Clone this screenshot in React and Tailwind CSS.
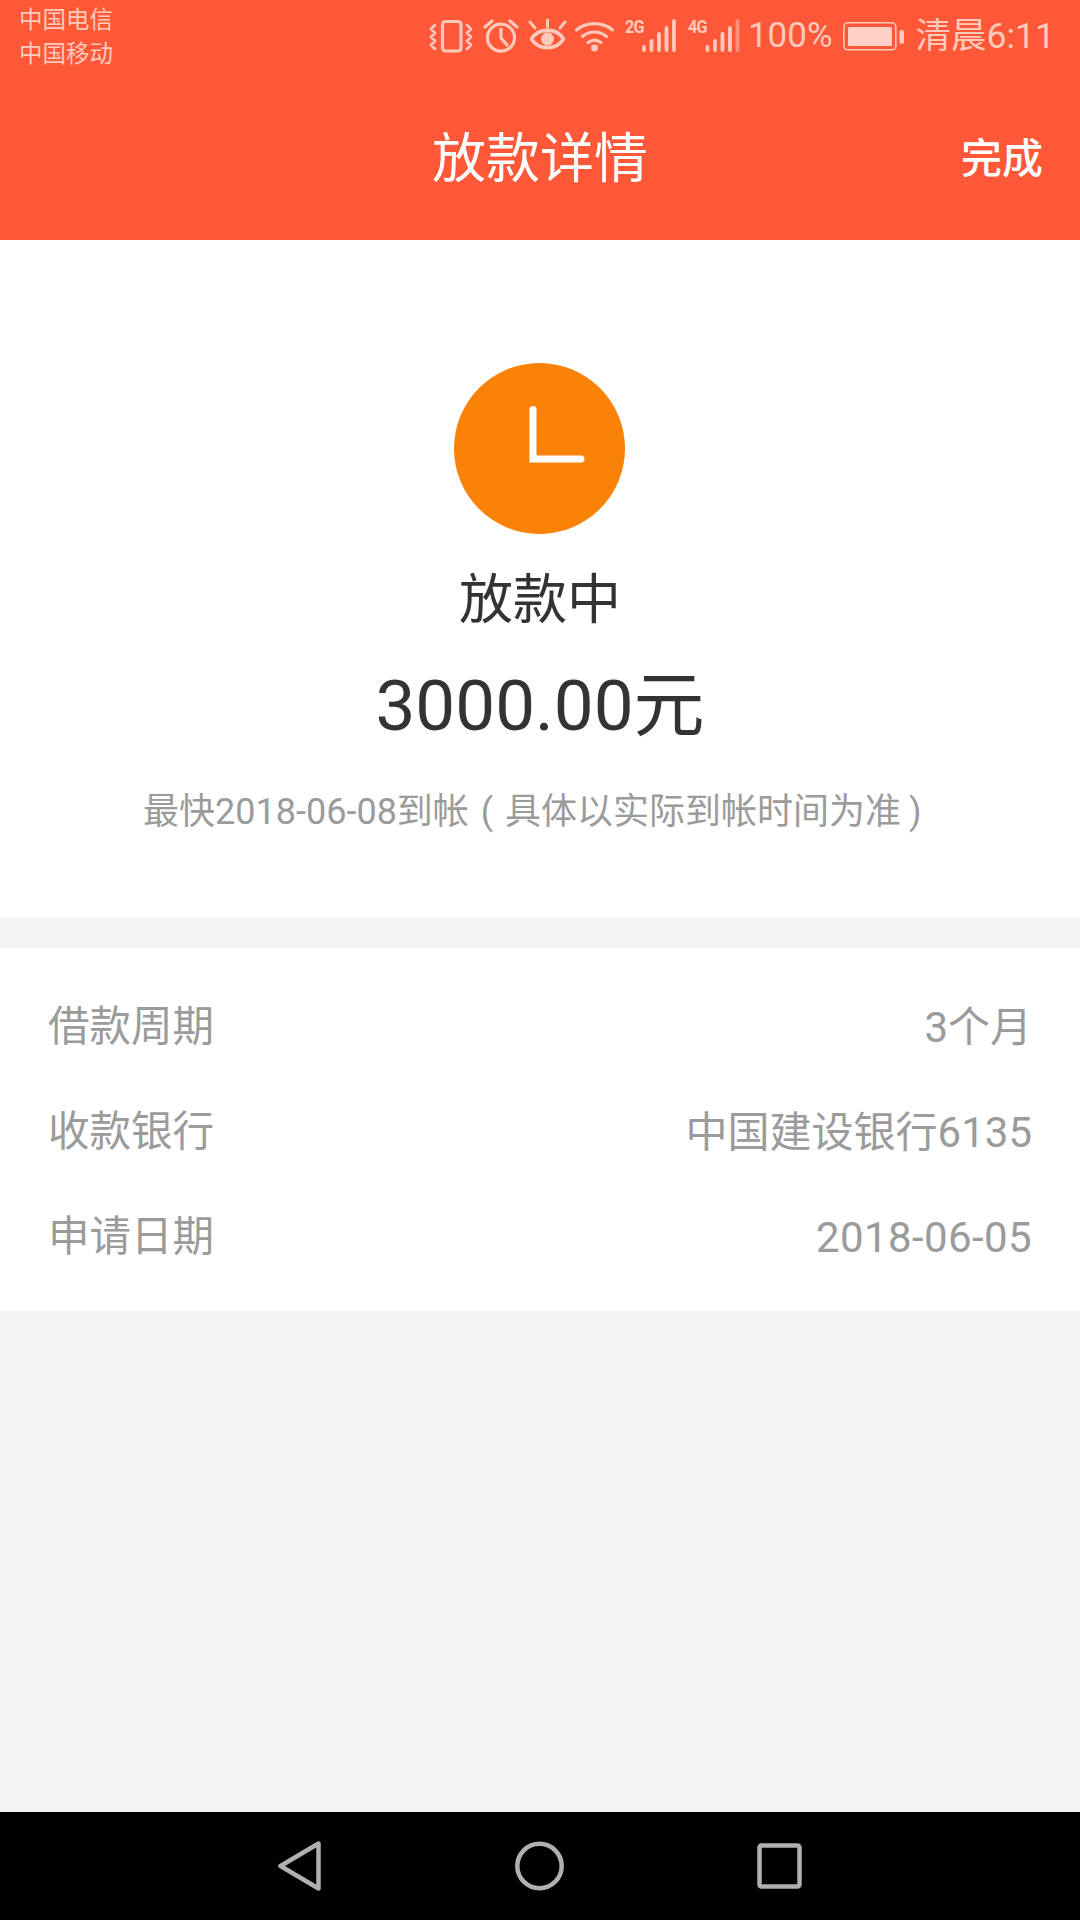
const font = { fontFamily: '"Roboto", "Noto Sans CJK SC", sans-serif' };

function Bars({ x, fadeLast }) {
  const tops = [31, 25, 18, 12, 5];
  return tops.map((top, i) => (
    <path
      key={i}
      d={`M${x + i * 7.5} ${top}V34`}
      strokeWidth="3.8"
      stroke={fadeLast && i === 4 ? '#ff9079' : '#ffc9bb'}
    />
  ));
}

function StatusIcons() {
  return (
    <svg width="320" height="40" viewBox="0 0 320 40" fill="none" stroke="#ffc9bb" strokeLinecap="round" strokeLinejoin="round" className="shrink-0">
      {/* vibrate */}
      <rect x="14.5" y="5.5" width="18.5" height="29.5" rx="3" strokeWidth="3.2" />
      <path d="M7 9l-4 4 4 4-4 4 4 4-4 4 4 4M39 9l4 4-4 4 4 4-4 4 4 4-4 4" strokeWidth="2.8" />
      {/* alarm */}
      <circle cx="73" cy="21.7" r="13.5" strokeWidth="3.2" />
      <path d="M73 13v9l6 7M57 11l7-6M89 11l-7-6" strokeWidth="3.2" />
      {/* eye */}
      <path d="M103.5 23c7-11.5 25-11.5 32 0-7 11.5-25 11.5-32 0z" strokeWidth="3.6" />
      <circle cx="119.5" cy="23" r="6.5" fill="#ffc9bb" strokeWidth="0" />
      <path d="M102 6l5 6M119.5 4v7M137 6l-5 6" strokeWidth="3" />
      {/* wifi */}
      <path d="M148.5 14c10-8.500 26-8.500 36 0M154.500 20.500c7-6 17-6 24 0M160 26.500c4-3 9-3 13 0" strokeWidth="3.200" />
      <circle cx="166.500" cy="32" r="3.400" fill="#ffc9bb" strokeWidth="0" />
      {/* signal */}
      <Bars x={216} />
      <Bars x={279.500} fadeLast />
    </svg>
  );
}

function Battery() {
  return (
    <svg width="61" height="29" viewBox="0 0 61 29" className="shrink-0">
      <rect x="0.8" y="0.8" width="52" height="27" rx="4" fill="none" stroke="#ffc9bb" strokeWidth="1.6" />
      <rect x="5" y="5" width="44" height="19" rx="1.500" fill="#ffd0c5" />
      <rect x="56.500" y="8" width="4.500" height="14" rx="2" fill="#ffc9bb" />
    </svg>
  );
}

function Row({ label, value, wide }) {
  return (
    <div className="flex h-[105px] items-center justify-between">
      <span className="text-[41.500px] text-[#9b9b9b]">{label}</span>
      <span className={`text-[42px] text-[#9b9b9b] ${wide ? 'tracking-[0.4px]' : ''}`}>{value}</span>
    </div>
  );
}

export default function App() {
  return (
    <div style={font} className="flex h-[1920px] w-[1080px] flex-col overflow-hidden bg-[#f3f3f3]">
      {/* header + status bar */}
      <header className="h-[240px] shrink-0 bg-[#ff5838]">
        <div className="flex h-[72px] items-start justify-between pl-[19px] pr-[25px]">
          <div className="pt-[3px] text-[23.500px] leading-[34px] text-[#ffc9bb]">
            <div>中国电信</div>
            <div>中国移动</div>
          </div>
          <div className="flex items-center pt-[16px] text-[35px] leading-[40px] text-[#ffc9bb]">
            <div className="relative">
              <StatusIcons />
              <span className="absolute left-[197px] top-[2px] origin-left scale-x-90 text-[18px] font-bold leading-[18px] tracking-[-1px]">2G</span>
              <span className="absolute left-[260px] top-[2px] origin-left scale-x-90 text-[18px] font-bold leading-[18px] tracking-[-1px]">4G</span>
            </div>
            <span>100%</span>
            <div className="ml-[10px] mr-[12px] flex items-center"><Battery /></div>
            <span className="text-[35.500px]">清晨6:11</span>
          </div>
        </div>
        <div className="relative flex h-[168px] items-center justify-center pt-[6px]">
          <h1 className="text-[54px] font-normal text-white">放款详情</h1>
          <span className="absolute right-[37px] top-[62px] text-[41px] font-medium leading-[50px] text-white">完成</span>
        </div>
      </header>

      {/* status summary */}
      <section className="flex h-[678px] shrink-0 flex-col items-center bg-white pt-[123px]">
        <div className="-ml-px flex h-[171px] w-[171px] items-center justify-center rounded-full bg-[#f98207]">
          <svg width="171" height="171" viewBox="0 0 171 171" fill="none">
            <path d="M79 46.500V96H127" stroke="#fff" strokeWidth="7" strokeLinecap="round" />
          </svg>
        </div>
        <div className="mt-[32px] text-[54px] leading-[70px] text-[#333]">放款中</div>
        <div className="mt-[27px] text-[71px] leading-[86px] text-[#333]">3000.00元</div>
        <div className="mt-[39px] flex text-[36px] leading-[48px] text-[#9b9b9b]">
          <span>最快2018-06-08到帐</span>
          <span className="w-[36px] text-center">(</span>
          <span>具体以实际到帐时间为准</span>
          <span className="w-[36px] pr-[7px] text-center">)</span>
        </div>
      </section>

      {/* loan info */}
      <section className="mt-[30px] h-[363px] shrink-0 bg-white pl-[48px] pr-[48px] pt-[27px]">
        <Row label="借款周期" value="3个月" />
        <Row label="收款银行" value="中国建设银行6135" />
        <Row label="申请日期" value="2018-06-05" wide />
      </section>

      <div className="flex-1" />

      {/* android nav bar */}
      <nav className="flex h-[108px] shrink-0 items-center justify-center bg-black">
        <svg width="43" height="50" viewBox="0 0 43 50" fill="none" stroke="#b0b0b0" strokeWidth="4.500" strokeLinejoin="round">
          <path d="M40.500 2.500v45L2.500 25z" />
        </svg>
        <svg width="49" height="50" viewBox="0 0 49 50" fill="none" stroke="#b0b0b0" strokeWidth="4.500" className="ml-[194px]">
          <circle cx="24.500" cy="25" r="22.200" />
        </svg>
        <svg width="45" height="46" viewBox="0 0 45 46" fill="none" stroke="#b0b0b0" strokeWidth="4.500" strokeLinejoin="round" className="ml-[193px]">
          <rect x="2.500" y="2.500" width="40" height="41" rx="2" />
        </svg>
      </nav>
    </div>
  );
}
